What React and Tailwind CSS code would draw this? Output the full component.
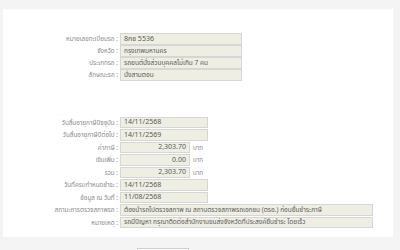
import React from "react";

const font = { fontFamily: '"Noto Sans", "Noto Sans Thai", Tahoma, sans-serif' };

function Row({ label, value, width, right, unit, thai, h = "h-[12px]" }) {
  return (
    <div className={`flex items-center ${h}`}>
      <div className="w-[117px] shrink-0 pr-[2px] text-right text-[6.3px] text-[#8a8a8a] whitespace-nowrap">
        {label} :
      </div>
      <div
        className={`h-[11.5px] flex items-center px-[3px] border border-[#d6d6d6] bg-[#eeeee3] text-[#5a5a5a] whitespace-nowrap overflow-hidden ${thai ? "text-[6.5px]" : "text-[7px]"} ${width} ${right ? "justify-end" : ""}`}
      >
        {value}
      </div>
      {unit && <span className="ml-[3px] text-[6.3px] text-[#8a8a8a]">{unit}</span>}
    </div>
  );
}

export default function App() {
  return (
    <div className="w-[400px] h-[250px] overflow-hidden bg-[#f4f4f4]" style={font}>
      <div className="h-[9px]" />
      <div className="mx-[3px] w-[390px] h-[228px] bg-white pt-[24px]">
        <div className="flex flex-col">
          <Row label="หมายเลขทะเบียนรถ" value="8กช 5536" width="w-[122px]" />
          <Row label="จังหวัด" value="กรุงเทพมหานคร" width="w-[122px]" thai />
          <Row label="ประเภทรถ" value="รถยนต์นั่งส่วนบุคคลไม่เกิน 7 คน" width="w-[122px]" thai />
          <Row label="ลักษณะรถ" value="นั่งสามตอน" width="w-[122px]" thai />
        </div>
        <div className="flex flex-col mt-[35px]">
          <Row h="h-[12.5px]" label="วันสิ้นอายุภาษีปัจจุบัน" value="14/11/2568" width="w-[88px]" />
          <Row h="h-[12.5px]" label="วันสิ้นอายุภาษีปีต่อไป" value="14/11/2569" width="w-[88px]" />
          <Row h="h-[12.5px]" label="ค่าภาษี" value="2,303.70" width="w-[70px]" right unit="บาท" />
          <Row h="h-[12.5px]" label="เงินเพิ่ม" value="0.00" width="w-[70px]" right unit="บาท" />
          <Row h="h-[12.5px]" label="รวม" value="2,303.70" width="w-[70px]" right unit="บาท" />
          <Row h="h-[12.5px]" label="วันที่ครบกำหนดชำระ" value="14/11/2568" width="w-[88px]" />
          <Row h="h-[12.5px]" label="ข้อมูล ณ วันที่" value="11/08/2568" width="w-[88px]" />
          <Row
            h="h-[12.5px]"
            thai
            label="สถานะการตรวจสภาพรถ"
            value="ต้องนำรถไปตรวจสภาพ ณ สถานตรวจสภาพรถเอกชน (ตรอ.) ก่อนยื่นชำระภาษี"
            width="w-[253px]"
          />
          <Row
            h="h-[12.5px]"
            thai
            label="หมายเหตุ"
            value="รถมีปัญหา กรุณาติดต่อสำนักงานขนส่งจังหวัดที่ประสงค์ยื่นชำระ โดยเร็ว"
            width="w-[253px]"
          />
        </div>
      </div>
      <div className="flex mt-[11px] pl-[137px]">
        <div className="w-[52px] h-[14px] border border-[#cfcfcf] bg-white" />
      </div>
    </div>
  );
}
